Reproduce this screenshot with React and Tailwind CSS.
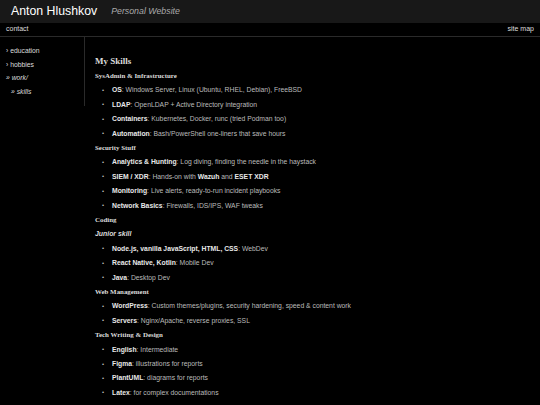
const sections = [
  {
    title: "SysAdmin & Infrastructure",
    items: [
      [["OS"], ": Windows Server, Linux (Ubuntu, RHEL, Debian), FreeBSD"],
      [["LDAP"], ": OpenLDAP + Active Directory integration"],
      [["Containers"], ": Kubernetes, Docker, runc (tried Podman too)"],
      [["Automation"], ": Bash/PowerShell one-liners that save hours"],
    ],
  },
  {
    title: "Security Stuff",
    items: [
      [["Analytics & Hunting"], ": Log diving, finding the needle in the haystack"],
      [["SIEM / XDR"], ": Hands-on with ", ["Wazuh"], " and ", ["ESET XDR"]],
      [["Monitoring"], ": Live alerts, ready-to-run incident playbooks"],
      [["Network Basics"], ": Firewalls, IDS/IPS, WAF tweaks"],
    ],
  },
  {
    title: "Coding",
    sub: "Junior skill",
    items: [
      [["Node.js, vanilla JavaScript, HTML, CSS"], ": WebDev"],
      [["React Native, Kotlin"], ": Mobile Dev"],
      [["Java"], ": Desktop Dev"],
    ],
  },
  {
    title: "Web Management",
    items: [
      [["WordPress"], ": Custom themes/plugins, security hardening, speed & content work"],
      [["Servers"], ": Nginx/Apache, reverse proxies, SSL"],
    ],
  },
  {
    title: "Tech Writing & Design",
    items: [
      [["English"], ": Intermediate"],
      [["Figma"], ": illustrations for reports"],
      [["PlantUML"], ": diagrams for reports"],
      [["Latex"], ": for complex documentations"],
    ],
  },
];

function Item({ parts }) {
  return (
    <li className="flex items-center h-[14.4px]">
      <span className="w-[17px] pl-[7px] text-[6px] text-[#bbb]">•</span>
      <span>
        {parts.map((p, i) =>
          Array.isArray(p) ? (
            <b key={i} className="font-bold text-[#e8e8e8]">{p[0]}</b>
          ) : (
            <span key={i}>{p}</span>
          )
        )}
      </span>
    </li>
  );
}

export default function App() {
  return (
    <div className="w-[540px] h-[405px] bg-black text-[#bbb] overflow-hidden opacity-[0.999] font-['Liberation_Sans',Arial,sans-serif]">
      {/* header */}
      <div className="h-[23px] bg-[#181818] flex items-center pl-[11px] gap-[14px]">
        <span className="text-white text-[12.3px] leading-none">Anton Hlushkov</span>
        <span className="italic text-[#aaa] text-[8.8px] leading-none">Personal Website</span>
      </div>

      {/* nav bar */}
      <div className="h-[14px] flex items-center justify-between px-[6px] border-b border-[#2a2a2a] text-[7px] text-[#ddd]">
        <span>contact</span>
        <span>site map</span>
      </div>

      <div className="flex">
        {/* sidebar */}
        <div className="w-[85px] shrink-0">
          <ul className="border-r border-[#2a2a2a] pt-[7px] pb-[8px] text-[6.8px] text-[#ddd] leading-[13.5px]">
            <li className="pl-[6px]">› education</li>
            <li className="pl-[6px]">› hobbies</li>
            <li className="pl-[6px] italic">» work/</li>
            <li className="pl-[11px] italic">» skills</li>
          </ul>
        </div>

        {/* content */}
        <div className="pl-[10px] pt-[17px]">
          <h1 className="font-['Liberation_Serif',serif] font-bold text-[9px] text-[#ddd] leading-[14px] mb-[1px]">My Skills</h1>
          {sections.map((s) => (
            <div key={s.title}>
              <h3 className="font-['Liberation_Serif',serif] font-bold text-[6.9px] text-[#ddd] h-[14.4px] flex items-center">{s.title}</h3>
              {s.sub && (
                <div className="italic font-bold text-[6.9px] text-[#ddd] h-[14.4px] flex items-center">{s.sub}</div>
              )}
              <ul className="text-[6.8px]">
                {s.items.map((it, i) => (
                  <Item key={i} parts={it} />
                ))}
              </ul>
            </div>
          ))}
        </div>
      </div>
    </div>
  );
}
